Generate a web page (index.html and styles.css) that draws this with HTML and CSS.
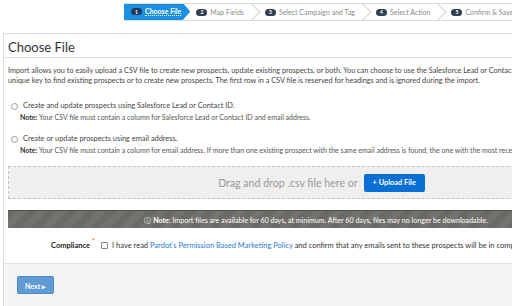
FILE: index.html
```html
<!DOCTYPE html>
<html>
<head>
<meta charset="utf-8">
<link rel="stylesheet" href="styles.css">
</head>
<body>
<div class="wizard-row">
  <div class="wizard">
    <div class="step active"><span class="badge">1</span><span class="label">Choose File</span></div>
    <div class="step"><span class="badge">2</span><span class="label">Map Fields</span><span class="chev"></span></div>
    <div class="step"><span class="badge">3</span><span class="label">Select Campaign and Tag</span><span class="chev"></span></div>
    <div class="step"><span class="badge">4</span><span class="label">Select Action</span><span class="chev"></span></div>
    <div class="step"><span class="badge">5</span><span class="label">Confirm &amp; Save</span></div>
  </div>
</div>
<div class="panel">
  <h1 class="title">Choose File</h1>
  <div class="body">
    <p class="intro">Import allows you to easily upload a CSV file to create new prospects, update existing prospects, or both. You can choose to use the Salesforce Lead or Contact ID or email address as the<br>unique key to find existing prospects or to create new prospects. The first row in a CSV file is reserved for headings and is ignored during the import.</p>
    <div class="option first">
      <div class="opt-line"><span class="radio"></span>Create and update prospects using Salesforce Lead or Contact ID.</div>
      <div class="opt-note"><b>Note:</b> Your CSV file must contain a column for Salesforce Lead or Contact ID and email address.</div>
    </div>
    <div class="option">
      <div class="opt-line"><span class="radio"></span>Create or update prospects using email address.</div>
      <div class="opt-note"><b>Note:</b> Your CSV file must contain a column for email address. If more than one existing prospect with the same email address is found, the one with the most recently updated record is used.</div>
    </div>
    <div class="drop">
      <span class="drop-text">Drag and drop .csv file here or</span>
      <span class="upload">+ Upload File</span>
    </div>
    <div class="notebar"><span class="info">&#9432;</span> <b>Note</b>: Import files are available for 60 days, at minimum. After 60 days, files may no longer be downloadable.</div>
    <div class="compliance">
      <span class="c-label">Compliance<span class="req">*</span></span>
      <span class="checkbox"></span>
      <span class="c-text">I have read <a class="link">Pardot's Permission Based Marketing Policy</a> and confirm that any emails sent to these prospects will be in compliance with it.</span>
    </div>
  </div>
  <div class="footer">
    <span class="next">Next &#9656;</span>
  </div>
</div>
</body>
</html>
```
FILE: styles.css
```css
html, body { margin: 0; padding: 0; background: #fff; }
body {
  font-family: Lato, "Open Sans", sans-serif;
  width: 512px; height: 306px; overflow: hidden;
  color: #333;
}
.wizard-row { display: flex; padding: 3px 0 0 124px; height: 18px; }
.wizard {
  display: flex; align-items: center; height: 16px;
  border: 1px solid #dcdcdc; border-left: none; border-right: none;
  white-space: nowrap; flex: 1; overflow: hidden;
  font-size: 7px; color: #8a8a8a;
}
.step { display: flex; align-items: center; height: 16px; padding: 0 0 0 7px; }
.step .badge {
  display: inline-flex; align-items: center; justify-content: center;
  width: 11px; height: 7px; border-radius: 4px;
  background: #2f3f52; color: #fff; font-size: 5px; font-weight: 700;
  margin-right: 3px;
}
.step.active {
  background: #1a8fe3; color: #fff; font-weight: 700;
  padding: 0 9px 0 7px; margin-top: -1px; height: 18px;
  clip-path: polygon(0 0, calc(100% - 8px) 0, 100% 50%, calc(100% - 8px) 100%, 0 100%);
}
.step.active .label { border-bottom: 1px dotted #fff; line-height: 8px; }
.step.active .badge { background: #1f3a57; }
.chev {
  width: 11px; height: 11px; border-right: 1px solid #d4d4d4; border-top: 1px solid #d4d4d4;
  transform: rotate(45deg); margin-left: 2px;
}
.step:nth-child(2) { padding-left: 6px; }
.panel {
  margin: 12px 0 0 3px; border: 1px solid #dedede; border-right: none;
  width: 509px; height: 280px; box-sizing: border-box; overflow: hidden;
}
.title {
  margin: 0; font-size: 13px; font-weight: 400; color: #333;
  padding: 5px 0 0 4px; height: 18px; border-bottom: 1px solid #dedede;
}
.body { padding: 0 0 0 4px; width: 626px; }
.intro { margin: 0; padding-top: 8px; font-size: 7.3px; line-height: 10px; color: #444; white-space: nowrap; height: 20px; }
.option.first { margin-top: 15px; }
.option { margin-top: 12px; }
.opt-line { display: flex; align-items: center; font-size: 7.4px; color: #444; padding-left: 3px; white-space: nowrap; height: 10px; line-height: 10px; }
.radio { width: 5px; height: 5px; border: 1px solid #999; border-radius: 50%; margin-right: 5px; }
.opt-note { font-size: 7px; color: #555; padding-left: 12px; white-space: nowrap; margin-top: 1px; line-height: 10px; height: 10px; }
.opt-note b { color: #333; }
.drop {
  margin-top: 11px; height: 33px; box-sizing: border-box; border: 1px dashed #c4c4c4; border-right: none;
  background: #efefef; display: flex; align-items: center; justify-content: center;
}
.drop-text { font-size: 10.6px; color: #9a9a9a; margin-right: 6px; }
.upload {
  background: #0a70d6; color: #fff; font-size: 7.4px; font-weight: 700;
  padding: 0 9px; height: 18px; line-height: 18px; border-radius: 2px;
}
.notebar {
  margin-top: 11px; height: 18px; line-height: 18px; box-sizing: border-box;
  background: repeating-linear-gradient(135deg, #6b6a66 0 7px, #73726e 7px 14px);
  color: #fff; font-size: 7.1px; text-align: center; white-space: nowrap;
  border-top: 1px solid #4d4d4d; padding-right: 10px;
}
.info { font-size: 7px; }
.compliance { display: flex; align-items: center; margin-top: 12px; font-size: 7.5px; white-space: nowrap; padding-left: 43px; height: 10px; }
.c-label { font-weight: 700; color: #222; position: relative; }
.req { color: #f08a24; font-size: 8px; position: absolute; top: -5px; right: -5px; }
.checkbox { width: 5px; height: 5px; border: 1px solid #888; border-radius: 1px; margin: 0 4px 0 11px; }
.c-text { color: #333; }
.link { color: #2a7bd6; }
.footer {
  margin-top: 13px; border-top: 1px solid #e2e2e2; background: #f4f4f4;
  height: 43px; padding: 9px 0 0 13px; box-sizing: border-box;
}
.next {
  display: inline-block; background: #5f9bd5; color: #fff; font-size: 7px; font-weight: 700;
  width: 37px; height: 18px; line-height: 18px; text-align: center; border-radius: 2px;
  border: 1px solid #4f8bc8; box-sizing: border-box;
}
```
